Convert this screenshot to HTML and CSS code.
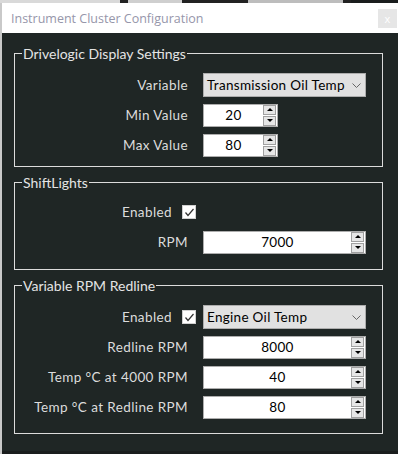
FILE: index.html
```html
<!DOCTYPE html>
<html lang="en">
<head>
  <meta charset="UTF-8" />
  <title>Instrument Cluster Configuration</title>
  <link rel="stylesheet" href="styles.css">
</head>
<body>
  <div class="desk">
    <div class="strip">
      <span class="s1"></span><span class="s2"></span><span class="s3"></span><span class="s2 w"></span><span class="s4"></span><span class="s2"></span>
    </div>
    <div class="window">
      <div class="titlebar">
        <span class="title">Instrument Cluster Configuration</span>
        <span class="close">x</span>
      </div>

      <div class="content">
        <fieldset class="group g1">
          <legend>Drivelogic Display Settings</legend>
          <div class="form">
            <label>Variable</label>
            <div class="select">
              <span>Transmission Oil Temp</span>
              <svg width="9" height="5" viewBox="0 0 9 5"><polyline points="0.5,0.5 4.5,4.5 8.5,0.5" fill="none" stroke="#666" stroke-width="1"/></svg>
            </div>

            <label>Min Value</label>
            <div class="spin short">
              <span class="val">20</span>
              <div class="btns"><span class="up"></span><span class="down"></span></div>
            </div>

            <label>Max Value</label>
            <div class="spin short">
              <span class="val">80</span>
              <div class="btns"><span class="up"></span><span class="down"></span></div>
            </div>
          </div>
        </fieldset>

        <fieldset class="group g2">
          <legend>ShiftLights</legend>
          <div class="form">
            <div class="check-cell">
              <label>Enabled</label>
              <span class="check"><svg width="11" height="11" viewBox="0 0 11 11"><polyline points="1.5,5.5 4,8.5 9.5,2" fill="none" stroke="#333" stroke-width="1.2"/></svg></span>
            </div>
            <div></div>

            <label>RPM</label>
            <div class="spin">
              <span class="val">7000</span>
              <div class="btns"><span class="up"></span><span class="down"></span></div>
            </div>
          </div>
        </fieldset>

        <fieldset class="group g3">
          <legend>Variable RPM Redline</legend>
          <div class="form">
            <div class="check-cell">
              <label>Enabled</label>
              <span class="check"><svg width="11" height="11" viewBox="0 0 11 11"><polyline points="1.5,5.5 4,8.5 9.5,2" fill="none" stroke="#333" stroke-width="1.2"/></svg></span>
            </div>
            <div class="select">
              <span>Engine Oil Temp</span>
              <svg width="9" height="5" viewBox="0 0 9 5"><polyline points="0.5,0.5 4.5,4.5 8.5,0.5" fill="none" stroke="#666" stroke-width="1"/></svg>
            </div>

            <label>Redline RPM</label>
            <div class="spin">
              <span class="val">8000</span>
              <div class="btns"><span class="up"></span><span class="down"></span></div>
            </div>

            <label>Temp °C at 4000 RPM</label>
            <div class="spin">
              <span class="val">40</span>
              <div class="btns"><span class="up"></span><span class="down"></span></div>
            </div>

            <label>Temp °C at Redline RPM</label>
            <div class="spin">
              <span class="val">80</span>
              <div class="btns"><span class="up"></span><span class="down"></span></div>
            </div>
          </div>
        </fieldset>
      </div>
    </div>
  </div>
</body>
</html>
```

FILE: styles.css
```css
body {
  margin: 0;
  background: #1a1d1d;
  font-family: "Lato", "Noto Sans", sans-serif;
}
.desk {
  width: 398px;
  height: 454px;
  overflow: hidden;
  background: linear-gradient(to right, #c9c9c9 0, #c9c9c9 2px, #1a1d1d 2px);
}
.strip {
  display: flex;
  height: 3px;
}
.strip span { height: 3px; }
.s1 { width: 120px; background: #d9d9d9; }
.s2 { width: 8px; background: #222; }
.s2.w { width: 66px; }
.s3 { width: 54px; background: #cfcfcf; }
.s4 { width: 95px; background: #bdbdbd; }

.window {
  margin-left: 2px;
  width: 396px;
  height: 448px;
  background: #1f2625;
}
.titlebar {
  height: 30px;
  background: #fff;
  display: flex;
  align-items: center;
  justify-content: space-between;
  padding-left: 9px;
}
.title {
  font-family: "Open Sans", sans-serif;
  font-size: 12.5px;
  color: #9696aa;
}
.close {
  width: 19px;
  height: 19px;
  margin-right: 1px;
  background: #e6e6e6;
  color: #fff;
  font-family: "Open Sans", sans-serif;
  font-size: 11px;
  display: flex;
  align-items: center;
  justify-content: center;
}

.content {
  padding: 12px 15px 0 12px;
}
.group {
  margin: 0;
  border: 1px solid #dcdcdc;
  padding: 0 8px;
  color: #e6e6e6;
}
.group + .group { margin-top: 7px; }
.group legend {
  font-size: 14px;
  line-height: 17px;
  padding: 0 1px;
  margin-left: -1px;
  color: #e4e4e4;
}
.g1 { padding-top: 8px; padding-bottom: 6px; }
.g2 { padding-top: 6px; padding-bottom: 12px; }
.g3 { padding-top: 8px; padding-bottom: 11px; }

.form {
  display: grid;
  grid-template-columns: 165px 163px;
  grid-auto-rows: 30px;
  column-gap: 15px;
  align-items: center;
}
.form label {
  text-align: right;
  font-size: 13.5px;
  letter-spacing: 0.4px;
  color: #dcdcdc;
}
.check-cell {
  display: flex;
  justify-content: flex-end;
  align-items: center;
  gap: 10px;
  margin-right: -8px;
}
.check {
  width: 12px;
  height: 12px;
  background: #fff;
  border: 1px solid #d0d0d0;
  display: flex;
  align-items: center;
  justify-content: center;
}

.select {
  height: 22px;
  background: #e1e1e1;
  border: 1px solid #adadad;
  display: flex;
  align-items: center;
  justify-content: space-between;
  padding: 0 4px 0 3px;
  font-size: 13.5px;
  letter-spacing: 0.3px;
  color: #000;
}
.spin {
  height: 21px;
  background: #fff;
  border: 1px solid #adadad;
  display: flex;
  align-items: center;
}
.spin.short { width: 73px; }
.val {
  flex: 1;
  text-align: center;
  font-size: 13.5px;
  letter-spacing: 0.3px;
  color: #000;
}
.btns {
  width: 13px;
  margin-right: 1px;
  display: flex;
  flex-direction: column;
  gap: 1px;
}
.btns span {
  background: #e6e6e6;
  border: 1px solid #a0a0a0;
  box-sizing: border-box;
  height: 10px;
  display: flex;
  align-items: center;
  justify-content: center;
}
.btns span::before {
  content: "";
  border-left: 3px solid transparent;
  border-right: 3px solid transparent;
}
.up::before { border-bottom: 3px solid #000; }
.down::before { border-top: 3px solid #000; }
```
